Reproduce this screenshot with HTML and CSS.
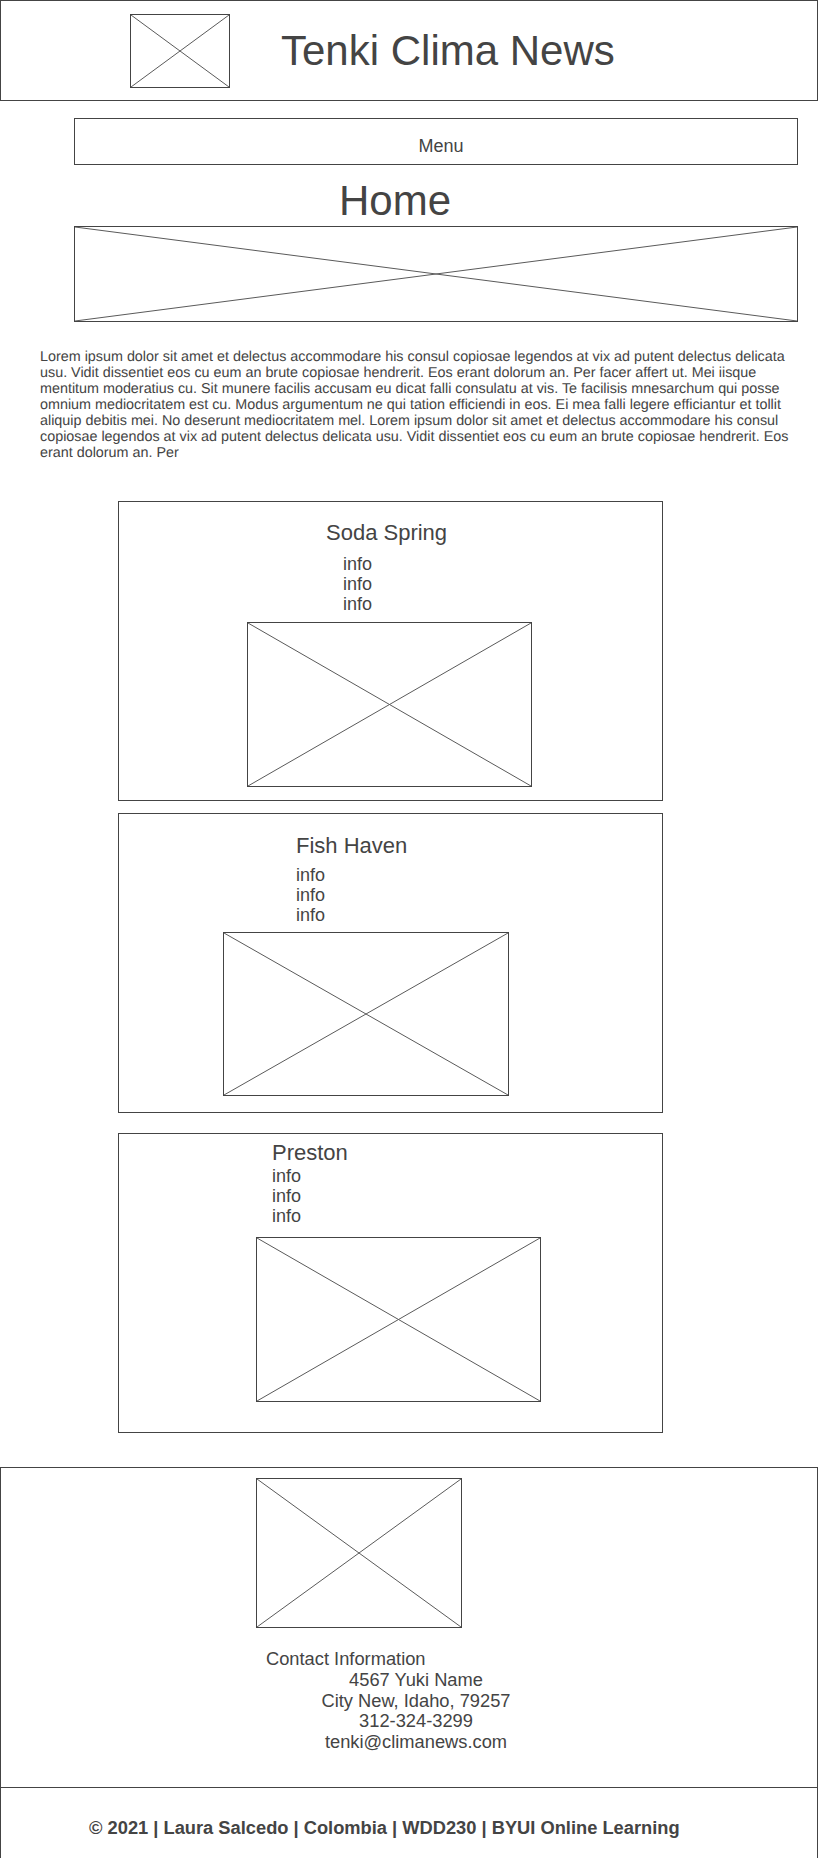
FILE: index.html
```html
<!DOCTYPE html>
<html lang="en">
<head>
<meta charset="utf-8">
<title>Tenki Clima News</title>
<link rel="stylesheet" href="styles.css">
</head>
<body>
<header class="site-header">
  <div class="ph logo"><svg viewBox="0 0 100 100" preserveAspectRatio="none"><line x1="0" y1="0" x2="100" y2="100"/><line x1="100" y1="0" x2="0" y2="100"/></svg></div>
  <h1 class="site-title">Tenki Clima News</h1>
</header>
<nav class="menu">Menu</nav>
<h2 class="page-title">Home</h2>
<div class="ph hero"><svg viewBox="0 0 100 100" preserveAspectRatio="none"><line x1="0" y1="0" x2="100" y2="100"/><line x1="100" y1="0" x2="0" y2="100"/></svg></div>
<p class="lorem">Lorem ipsum dolor sit amet et delectus accommodare his consul copiosae legendos at vix ad putent delectus delicata usu. Vidit dissentiet eos cu eum an brute copiosae hendrerit. Eos erant dolorum an. Per facer affert ut. Mei iisque mentitum moderatius cu. Sit munere facilis accusam eu dicat falli consulatu at vis. Te facilisis mnesarchum qui posse omnium mediocritatem est cu. Modus argumentum ne qui tation efficiendi in eos. Ei mea falli legere efficiantur et tollit aliquip debitis mei. No deserunt mediocritatem mel. Lorem ipsum dolor sit amet et delectus accommodare his consul copiosae legendos at vix ad putent delectus delicata usu. Vidit dissentiet eos cu eum an brute copiosae hendrerit. Eos erant dolorum an. Per</p>
<main class="cards">
  <section class="card card-soda">
    <h3 class="card-title">Soda Spring</h3>
    <ul class="card-info"><li>info</li><li>info</li><li>info</li></ul>
    <div class="ph card-img"><svg viewBox="0 0 100 100" preserveAspectRatio="none"><line x1="0" y1="0" x2="100" y2="100"/><line x1="100" y1="0" x2="0" y2="100"/></svg></div>
  </section>
  <section class="card card-fish">
    <h3 class="card-title">Fish Haven</h3>
    <ul class="card-info"><li>info</li><li>info</li><li>info</li></ul>
    <div class="ph card-img"><svg viewBox="0 0 100 100" preserveAspectRatio="none"><line x1="0" y1="0" x2="100" y2="100"/><line x1="100" y1="0" x2="0" y2="100"/></svg></div>
  </section>
  <section class="card card-preston">
    <h3 class="card-title">Preston</h3>
    <ul class="card-info"><li>info</li><li>info</li><li>info</li></ul>
    <div class="ph card-img"><svg viewBox="0 0 100 100" preserveAspectRatio="none"><line x1="0" y1="0" x2="100" y2="100"/><line x1="100" y1="0" x2="0" y2="100"/></svg></div>
  </section>
</main>
<footer class="site-footer">
  <div class="contact">
    <div class="ph footer-img"><svg viewBox="0 0 100 100" preserveAspectRatio="none"><line x1="0" y1="0" x2="100" y2="100"/><line x1="100" y1="0" x2="0" y2="100"/></svg></div>
    <h4 class="contact-title">Contact Information</h4>
    <address class="contact-lines">4567 Yuki Name<br>City New, Idaho, 79257<br>312-324-3299<br>tenki@climanews.com</address>
  </div>
  <div class="copyright">
    <p class="copy-text">© 2021 | Laura Salcedo | Colombia | WDD230 | BYUI Online Learning</p>
  </div>
</footer>
</body>
</html>
```

FILE: styles.css
```css
html, body {
  margin: 0;
  padding: 0;
  background: #fff;
}
body {
  width: 819px;
  font-family: "Liberation Sans", Arial, sans-serif;
  color: #444;
}

.ph {
  box-sizing: border-box;
  border: 1px solid #444;
}
.ph svg {
  display: block;
  width: 100%;
  height: 100%;
}
.ph line {
  stroke: #5a5a5a;
  stroke-width: 1;
  vector-effect: non-scaling-stroke;
}

.site-header {
  box-sizing: border-box;
  width: 818px;
  height: 101px;
  border: 1px solid #444;
  display: flex;
  align-items: center;
  padding-left: 129px;
}
.logo {
  width: 100px;
  height: 74px;
  flex: none;
}
.site-title {
  margin: 0 0 0 51px;
  font-size: 42px;
  font-weight: normal;
  line-height: 47px;
}

.menu {
  box-sizing: border-box;
  margin: 17px 0 0 74px;
  width: 724px;
  height: 47px;
  border: 1px solid #444;
  padding: 17px 0 0 10px;
  text-align: center;
  font-size: 18px;
  line-height: 20px;
}

.page-title {
  margin: 13px 0 0 339px;
  font-size: 42px;
  font-weight: normal;
  line-height: 46px;
}

.hero {
  margin: 2px 0 0 74px;
  width: 724px;
  height: 96px;
}

.lorem {
  margin: 27px 0 0;
  padding: 0 17px 0 40px;
  font-size: 14.35px;
  line-height: 16px;
  text-rendering: geometricPrecision;
}

.cards {
  display: block;
  margin-top: 40px;
}
.card {
  box-sizing: border-box;
  margin-left: 118px;
  width: 545px;
  height: 300px;
  border: 1px solid #444;
}
.card-title {
  margin: 0;
  font-size: 22px;
  font-weight: normal;
  line-height: 26px;
}
.card-info {
  list-style: none;
  margin: 0;
  padding: 0;
  font-size: 18px;
  line-height: 20px;
}
.card-img {
  width: 285px;
  height: 165px;
}

.card-soda { padding-top: 18px; }
.card-soda .card-title { padding-left: 207px; }
.card-soda .card-info { margin-top: 8px; padding-left: 224px; }
.card-soda .card-img { margin: 8px 0 0 128px; }

.card-fish { margin-top: 12px; padding-top: 19px; }
.card-fish .card-title { padding-left: 177px; }
.card-fish .card-info { margin-top: 6px; padding-left: 177px; }
.card-fish .card-img { margin: 7px 0 0 104px; width: 286px; height: 164px; }

.card-preston { margin-top: 20px; padding-top: 6px; }
.card-preston .card-title { padding-left: 153px; }
.card-preston .card-info { margin-top: 0; padding-left: 153px; }
.card-preston .card-img { margin: 11px 0 0 137px; }

.site-footer {
  box-sizing: border-box;
  width: 818px;
  margin-top: 34px;
  border: 1px solid #444;
  border-bottom: none;
}
.contact {
  box-sizing: border-box;
  height: 320px;
  border-bottom: 1px solid #444;
  padding-top: 10px;
}
.footer-img {
  margin-left: 255px;
  width: 206px;
  height: 150px;
}
.contact-title {
  margin: 21px 0 0 265px;
  font-size: 18.3px;
  font-weight: normal;
  line-height: 20.8px;
}
.contact-lines {
  width: 300px;
  margin-left: 265px;
  text-align: center;
  font-style: normal;
  font-size: 18.3px;
  line-height: 20.8px;
}

.copyright {
  box-sizing: border-box;
  height: 70px;
  padding: 29px 0 0 88px;
}
.copy-text {
  margin: 0;
  font-size: 18.3px;
  font-weight: bold;
  line-height: 21px;
}
```
